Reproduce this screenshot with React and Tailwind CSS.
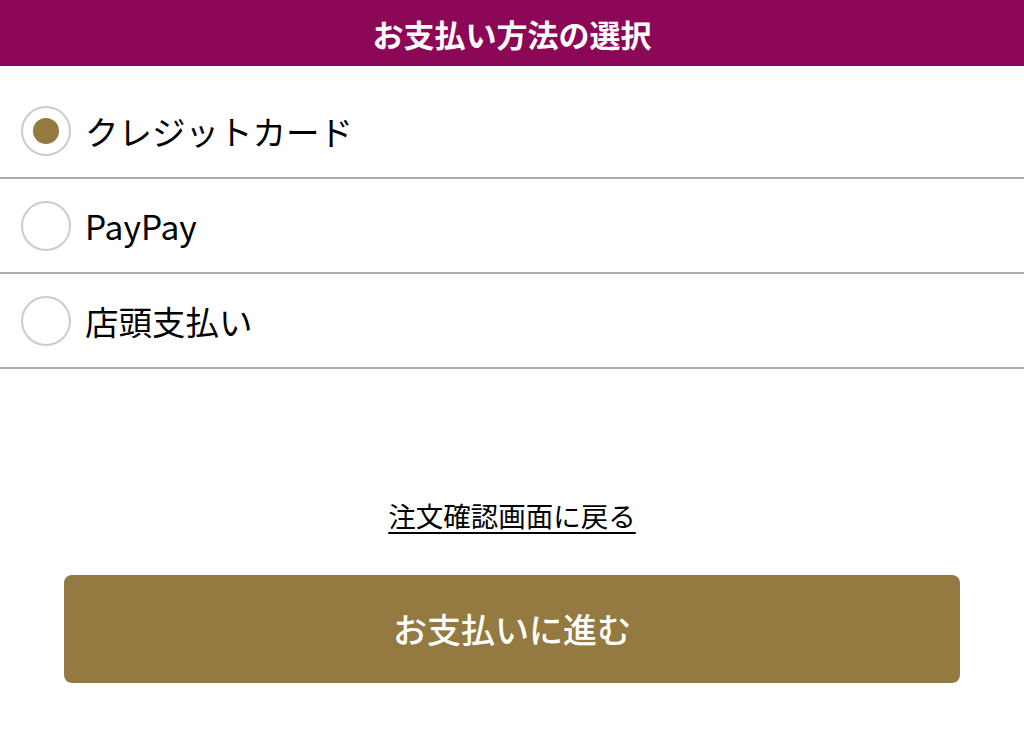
import React, { useState } from 'react';

const methods = [
  { id: 'card', label: 'クレジットカード' },
  { id: 'paypay', label: 'PayPay' },
  { id: 'store', label: '店頭支払い' },
];

const font = { fontFamily: '"Noto Sans CJK JP", "Noto Sans", sans-serif' };

const Radio = ({ checked }) => (
  <span className="flex h-[50px] w-[50px] shrink-0 items-center justify-center rounded-full border-2 border-[#cccccc] bg-white">
    {checked && <span className="h-[26px] w-[26px] rounded-full bg-[#947a41]" />}
  </span>
);

export default function App() {
  const [selected, setSelected] = useState('card');

  return (
    <div className="min-h-[741px] bg-white text-black" style={font}>
      <header className="flex h-[66px] items-center justify-center bg-[#8c0856]">
        <h1 className="text-[31px] font-bold leading-none text-white">お支払い方法の選択</h1>
      </header>

      <ul className="pt-[18px]">
        {methods.map((m) => (
          <li key={m.id} className="border-b-2 border-[#aaaaaa]">
            <button
              type="button"
              onClick={() => setSelected(m.id)}
              className="flex h-[93px] w-full items-center gap-[14px] pl-[21px] text-left"
            >
              <Radio checked={selected === m.id} />
              <span className="text-[33.5px] leading-none">{m.label}</span>
            </button>
          </li>
        ))}
      </ul>

      <div className="flex flex-col items-center pt-[133px]">
        <a href="#" className="text-[27.5px] leading-none underline underline-offset-[5px] decoration-[2px]">
          注文確認画面に戻る
        </a>
      </div>

      <div className="px-[64px] pt-[45px]">
        <button
          type="button"
          className="flex h-[108px] w-full items-center justify-center rounded-[8px] bg-[#947a41] text-[34px] font-medium text-white"
        >
          お支払いに進む
        </button>
      </div>
    </div>
  );
}
